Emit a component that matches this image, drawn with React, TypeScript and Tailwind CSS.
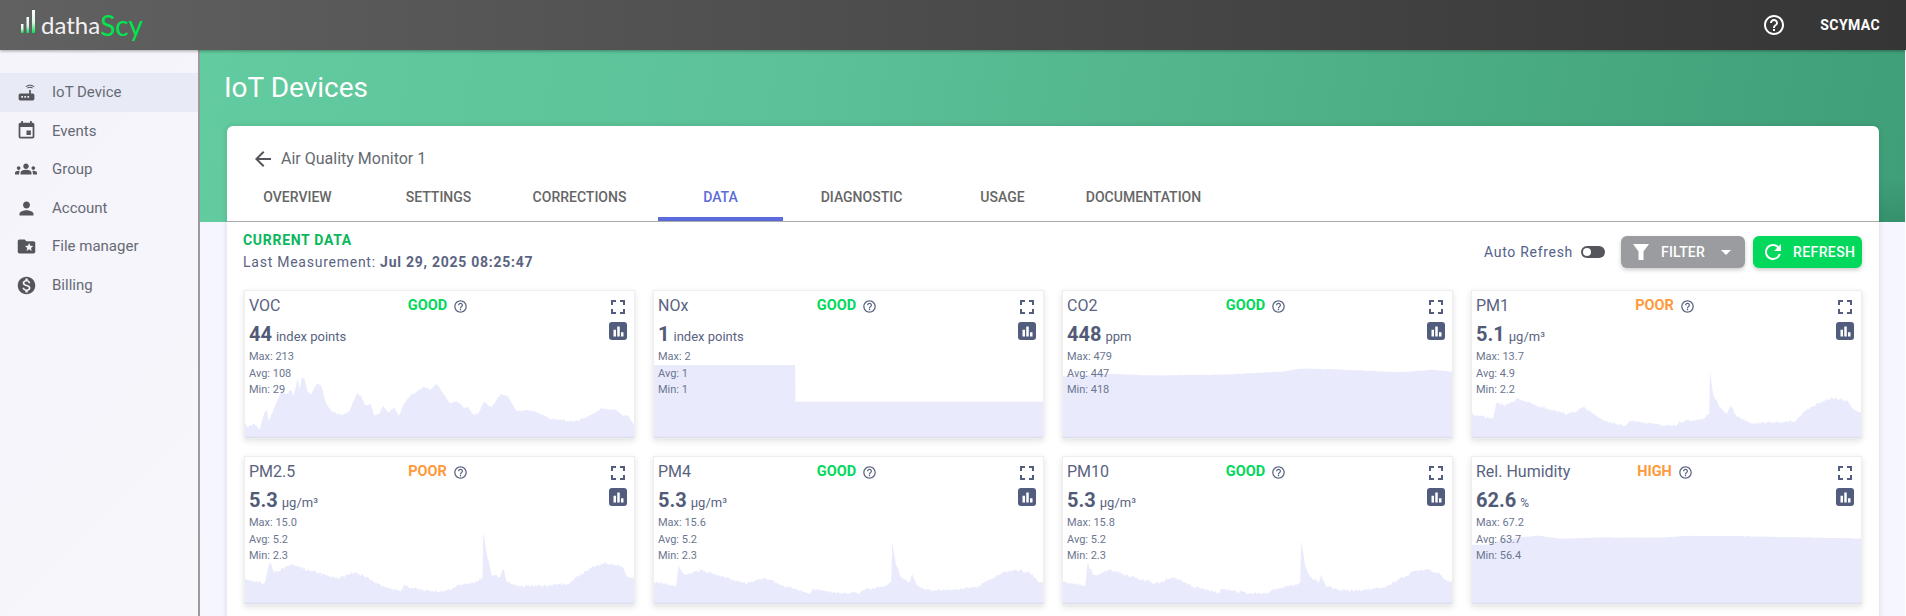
import React from "react";
import {
  MdRouter, MdEvent, MdGroups, MdPerson, MdFolderSpecial, MdMonetizationOn,
  MdHelpOutline, MdFullscreen, MdBarChart, MdRefresh, MdArrowBack, MdArrowDropDown,
} from "react-icons/md";

type P = [number, number];

function buildPath(pts: P[], left: number, top: number, noise: number, seed: number): string {
  let s = seed;
  const rnd = () => {
    s = (s * 9301 + 49297) % 233280;
    return s / 233280 - 0.5;
  };
  const out: string[] = [];
  for (let i = 0; i < pts.length - 1; i++) {
    const [x0, y0] = pts[i];
    const [x1, y1] = pts[i + 1];
    const steps = Math.max(1, Math.round((x1 - x0) / 3));
    for (let k = 0; k < steps; k++) {
      const t = k / steps;
      const x = x0 + (x1 - x0) * t - left;
      const y = y0 + (y1 - y0) * t - top + (k === 0 ? 0 : rnd() * noise);
      out.push(`${x.toFixed(1)},${y.toFixed(1)}`);
    }
  }
  const last = pts[pts.length - 1];
  out.push(`${(last[0] - left).toFixed(1)},${(last[1] - top).toFixed(1)}`);
  return `M${(pts[0][0] - left).toFixed(1)},447 L${out.join(" L")} L${(last[0] - left).toFixed(1)},447 Z`;
}

const voc: P[] = [[41,430],[50,445],[70,435],[85,452],[100,400],[108,392],[112,428],[130,385],[150,335],[165,345],[180,330],[188,350],[200,295],[206,330],[212,295],[220,295],[230,335],[240,345],[258,312],[270,315],[285,370],[300,395],[330,408],[355,398],[378,342],[390,348],[405,378],[420,375],[432,410],[445,405],[460,380],[475,400],[490,385],[505,410],[520,375],[540,350],[560,335],[580,322],[600,330],[620,312],[640,345],[660,372],[680,365],[700,385],[715,385],[730,405],[745,405],[762,365],[785,385],[812,345],[835,350],[860,395],[885,395],[915,395],[960,418],[1020,427],[1050,425],[1100,400],[1115,388],[1160,392],[1180,408],[1200,412],[1215,440]];
const pm25: P[] = [[41,388],[100,402],[115,338],[130,368],[185,345],[230,362],[290,378],[320,388],[375,370],[420,392],[460,412],[510,428],[520,410],[600,428],[660,425],[680,410],[740,398],[758,385],[760,245],[770,310],[785,375],[810,385],[820,358],[830,395],[870,412],[950,410],[1015,405],[1050,380],[1090,352],[1130,340],[1175,350],[1200,385],[1215,385]];
const pm1: P[] = [[32,405],[95,418],[105,370],[130,378],[175,358],[230,380],[320,405],[370,385],[430,425],[495,442],[510,425],[600,440],[650,440],[660,428],[730,420],[748,405],[750,275],[760,345],[775,375],[800,405],[812,375],[830,410],[870,432],[960,430],[1010,425],[1040,395],[1080,370],[1120,355],[1165,365],[1185,395],[1206,400]];
const pm4: P[] = [[38,398],[105,412],[112,348],[130,378],[182,362],[230,378],[320,403],[372,385],[430,412],[510,433],[515,420],[600,433],[660,432],[670,422],[740,408],[754,400],[757,275],[768,345],[785,385],[810,400],[817,375],[830,408],[870,425],[950,423],[1015,412],[1050,393],[1085,372],[1130,360],[1175,372],[1195,395],[1212,400]];
const pm10: P[] = [[35,398],[102,412],[109,342],[127,378],[179,362],[227,378],[317,403],[369,385],[427,412],[507,433],[512,420],[597,433],[657,432],[667,422],[737,408],[751,400],[754,272],[765,345],[782,385],[807,400],[814,375],[827,408],[867,425],[947,423],[1012,412],[1047,393],[1082,372],[1127,360],[1172,372],[1192,395],[1209,400]];
const co2: P[] = [[35,290],[180,282],[300,287],[500,285],[600,280],[700,275],[740,268],[760,266],[850,268],[1050,277],[1150,270],[1209,276]];
const hum: P[] = [[32,285],[95,285],[110,272],[180,262],[230,257],[300,267],[400,263],[600,263],[680,258],[800,258],[1000,262],[1206,266]];
const nox: P[] = [[38,255],[464,255],[465,367],[1212,367]];

const cards = [
  { name: "VOC", status: "GOOD", value: "44", unit: "index points", max: "213", avg: "108", min: "29", path: buildPath(voc, 41, 29, 6, 11) },
  { name: "NOx", status: "GOOD", value: "1", unit: "index points", max: "2", avg: "1", min: "1", path: buildPath(nox, 38, 29, 0, 1) },
  { name: "CO2", status: "GOOD", value: "448", unit: "ppm", max: "479", avg: "447", min: "418", path: buildPath(co2, 35, 29, 2, 7) },
  { name: "PM1", status: "POOR", value: "5.1", unit: "µg/m³", max: "13.7", avg: "4.9", min: "2.2", path: buildPath(pm1, 32, 29, 9, 23) },
  { name: "PM2.5", status: "POOR", value: "5.3", unit: "µg/m³", max: "15.0", avg: "5.2", min: "2.3", path: buildPath(pm25, 41, 17, 9, 37) },
  { name: "PM4", status: "GOOD", value: "5.3", unit: "µg/m³", max: "15.6", avg: "5.2", min: "2.3", path: buildPath(pm4, 38, 17, 9, 41) },
  { name: "PM10", status: "GOOD", value: "5.3", unit: "µg/m³", max: "15.8", avg: "5.2", min: "2.3", path: buildPath(pm10, 35, 17, 9, 53) },
  { name: "Rel. Humidity", status: "HIGH", value: "62.6", unit: "%", max: "67.2", avg: "63.7", min: "56.4", path: buildPath(hum, 32, 17, 2, 61) },
];

const nav = [
  { label: "IoT Device", Icon: MdRouter, active: true },
  { label: "Events", Icon: MdEvent },
  { label: "Group", Icon: MdGroups },
  { label: "Account", Icon: MdPerson },
  { label: "File manager", Icon: MdFolderSpecial },
  { label: "Billing", Icon: MdMonetizationOn },
];

const tabs = ["OVERVIEW", "SETTINGS", "CORRECTIONS", "DATA", "DIAGNOSTIC", "USAGE", "DOCUMENTATION"];

function Metric({ c }: { c: (typeof cards)[number] }) {
  return (
    <div className="relative h-[149px] overflow-hidden border border-[#eeeeee] bg-white shadow-[0_2px_6px_rgba(0,0,0,0.12)]">
      <svg className="absolute left-0 top-0 h-full w-full" viewBox="0 0 1174 449" preserveAspectRatio="none">
        <path d={c.path} fill="#e9ebfc" />
        <rect x="0" y="445" width="1174" height="4" fill="#dcdff0" />
      </svg>
      <div className="relative flex pl-[4px] pr-[7px] pt-[3px]">
        <div className="min-w-0 flex-1">
          <div className="h-[24px] whitespace-nowrap text-[16px] leading-[24px] text-[#59637f]">{c.name}</div>
          <div className="mt-[2px] flex h-[28px] items-baseline gap-[4px] whitespace-nowrap text-[#59637f]">
            <span className="text-[20px] font-bold leading-[28px] text-[#515b78]">{c.value}</span>
            <span className={c.unit === "%" ? "text-[12px]" : "text-[13px]"}>{c.unit}</span>
          </div>
        </div>
        <div className="flex h-[24px] items-center gap-[6px]">
          <span className={`text-[14.5px] font-bold ${c.status === "GOOD" ? "text-[#02d95c]" : "text-[#ff9a3c]"}`}>{c.status}</span>
          <MdHelpOutline className="h-[15px] w-[15px] text-[#59637f]" />
        </div>
        <div className="flex flex-1 flex-col items-end">
          <MdFullscreen className="-mr-[3px] mt-[1px] h-[24px] w-[24px] text-[#525c7c]" />
          <div className="mt-[3px] flex h-[18px] w-[18px] items-center justify-center rounded-[3px] bg-[#525c7c]">
            <MdBarChart className="h-[15px] w-[15px] text-white" />
          </div>
        </div>
      </div>
      <div className="relative mt-[1px] pl-[4px] text-[11px] leading-[16.5px] text-[#6b7690]">
        <div>Max: {c.max}</div>
        <div>Avg: {c.avg}</div>
        <div>Min: {c.min}</div>
      </div>
    </div>
  );
}

export default function App() {
  return (
    <div className="flex h-[616px] w-[1906px] flex-col overflow-hidden bg-white font-['Roboto',sans-serif]">
      <header className="relative z-20 flex h-[50px] shrink-0 items-center justify-between bg-[linear-gradient(90deg,#616161,#353535)] pr-[26px] shadow-[0_1px_3px_rgba(0,0,0,0.35)]">
        <div className="flex items-center pl-[21px]">
          <svg width="14" height="24" viewBox="0 0 14 24" className="mb-[6px]">
            <defs>
              <linearGradient id="lg" x1="0" y1="0" x2="0" y2="1">
                <stop offset="0" stopColor="#ffffff" />
                <stop offset="0.55" stopColor="#d8f5e0" />
                <stop offset="1" stopColor="#00e050" />
              </linearGradient>
            </defs>
            <rect x="0" y="14" width="2.5" height="9" fill="url(#lg)" />
            <rect x="5.5" y="7" width="2.5" height="16" fill="url(#lg)" />
            <rect x="11" y="0" width="3" height="23" fill="url(#lg)" />
          </svg>
          <span className="ml-[6px] font-['Lato',sans-serif] text-[24px] leading-none text-[#f2f2f2]">datha</span>
          <span className="font-['Lato',sans-serif] text-[28px] leading-none text-[#00e64d]">Scy</span>
        </div>
        <div className="flex items-center gap-[34px]">
          <MdHelpOutline className="h-[24px] w-[24px] text-white" />
          <span className="text-[14px] font-bold tracking-[0.4px] text-white">SCYMAC</span>
        </div>
      </header>

      <div className="flex min-h-0 flex-1">
        <aside className="w-[200px] shrink-0 border-r-2 border-[#9b9b9b] bg-[linear-gradient(135deg,#f5f4fb,#f6f6fb)] pt-[23px]">
          {nav.map(({ label, Icon, active }) => (
            <div key={label} className={`flex h-[38.6px] items-center ${active ? "bg-[#e8eaf6]" : ""}`}>
              <Icon className={label === "Group" ? "ml-[15px] h-[22px] w-[22px] text-[#55565b]" : "ml-[16px] h-[21px] w-[21px] text-[#55565b]"} />
              <span className="ml-[15px] text-[15px] text-[#666a75]">{label}</span>
            </div>
          ))}
        </aside>

        <main className="relative mr-px min-w-0 flex-1 bg-[#f6f7fe]">
          <div className="absolute inset-x-0 top-0 h-[172px] bg-[radial-gradient(ellipse_at_100%_100%,rgba(30,110,80,0.3),transparent_18%),linear-gradient(100deg,#62cb9f_0%,#5cc198_35%,#4bad84_72%,#3f9f78_100%)]" />
          <div className="relative px-[24px] pt-[18px]">
            <h1 className="h-[40px] text-[28px] font-normal leading-[40px] text-white">IoT Devices</h1>
          </div>
          <section className="relative ml-[27px] mr-[26px] mt-[18px] h-[600px] rounded-t-[6px] bg-white shadow-[0_0_6px_rgba(0,0,0,0.12)]">
            <div className="h-[96px] border-b border-[#aaaaaa]">
              <div className="flex h-[66px] items-center pl-[24px] text-[#666a70]">
                <MdArrowBack className="h-[24px] w-[24px] text-[#55565b]" />
                <span className="ml-[6px] text-[16px]">Air Quality Monitor 1</span>
              </div>
              <div className="flex">
                {tabs.map((t) => (
                  <div
                    key={t}
                    className={`mx-[8px] flex h-[29px] w-[125px] items-start justify-center text-[14px] font-medium leading-[10px] ${t === "DATA" ? "border-b-4 border-[#5c6bdc] text-[#5c6bdc]" : "text-[#666666]"}`}
                  >
                    {t}
                  </div>
                ))}
              </div>
            </div>

            <div className="flex items-start justify-between pl-[16px] pr-[17px] pt-[8px]">
              <div>
                <div className="text-[14px] font-bold leading-[20px] tracking-[0.7px] text-[#0ab75c]">CURRENT DATA</div>
                <div className="mt-[2px] text-[14px] leading-[20px] tracking-[0.75px] text-[#5a6482]">
                  Last Measurement: <span className="font-bold">Jul 29, 2025 08:25:47</span>
                </div>
              </div>
              <div className="flex items-center pt-[6px]">
                <span className="text-[14px] tracking-[0.7px] text-[#52618a]">Auto Refresh</span>
                <div className="ml-[8px] flex h-[12px] w-[24px] items-center rounded-full bg-[#55565b] pl-[2px]">
                  <div className="h-[8px] w-[8px] rounded-full bg-white" />
                </div>
                <div className="ml-[16px] flex h-[32px] w-[124px] items-center rounded-[6px] bg-[#9a9c9f] pl-[12px] text-[14px] font-medium tracking-[0.2px] text-white shadow-[0_2px_4px_rgba(0,0,0,0.2)]">
                  <svg width="16" height="16" viewBox="0 0 16 16" fill="currentColor">
                    <path d="M0 0H16L10.5 7.5V16H5.5V7.5Z" />
                  </svg>
                  <span className="ml-[12px]">FILTER</span>
                  <MdArrowDropDown className="ml-[9px] h-[24px] w-[24px]" />
                </div>
                <div className="ml-[8px] flex h-[32px] w-[109px] items-center rounded-[6px] bg-[#02d95c] pl-[8px] text-[14px] font-medium tracking-[0.4px] text-white shadow-[0_2px_4px_rgba(0,0,0,0.2)]">
                  <MdRefresh className="h-[24px] w-[24px]" />
                  <span className="ml-[8px]">REFRESH</span>
                </div>
              </div>
            </div>

            <div className="mt-[18px] grid grid-cols-4 gap-x-[18px] gap-y-[17px] pl-[17px] pr-[17px]">
              {cards.map((c) => (
                <Metric key={c.name} c={c} />
              ))}
            </div>
          </section>
        </main>
      </div>
    </div>
  );
}
